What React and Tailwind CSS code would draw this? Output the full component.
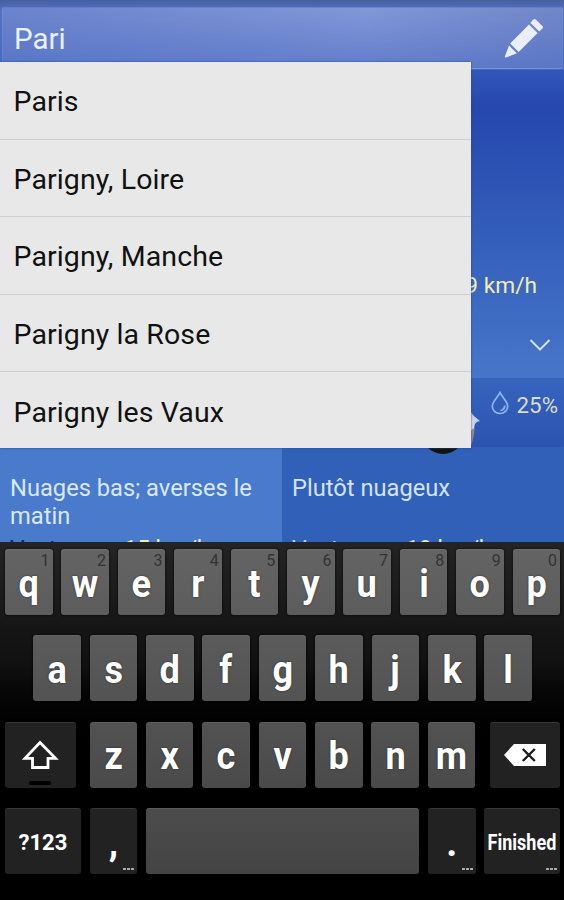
import React from "react";

const cities = ["Paris", "Parigny, Loire", "Parigny, Manche", "Parigny la Rose", "Parigny les Vaux"];

const letterKey =
  "relative flex h-[66px] w-[47.6px] shrink-0 items-center justify-center rounded-[3px] border-t border-white/10 text-[38px] font-bold leading-none text-white shadow-[0_0_2px_1px_#0006]";
const darkKey =
  "relative flex h-[66px] shrink-0 items-center justify-center rounded-[3px] border-t border-white/10 bg-[#222222] font-bold leading-none text-white shadow-[0_0_2px_1px_#0006]";

function LetterKey({ label, hint, tone }) {
  return (
    <div className={`${letterKey} ${tone}`}>
      {hint && <span className="absolute right-[3px] top-[2px] text-[16px] font-normal leading-[17px] text-[#333]">{hint}</span>}
      <span className="mt-[2px] scale-x-[0.95] [text-shadow:0_0_2px_#222]">{label}</span>
    </div>
  );
}

function Dots() {
  return (
    <span className="absolute bottom-[4px] right-[3px] flex gap-[1px]">
      <i className="h-[2px] w-[3px] bg-[#aaa]" />
      <i className="h-[2px] w-[3px] bg-[#aaa]" />
      <i className="h-[2px] w-[3px] bg-[#aaa]" />
    </span>
  );
}

function SearchBar() {
  return (
    <header className="h-[70px] bg-linear-to-b from-[#465f9f] via-[#5273c4] via-15% to-[#4169c5] pl-[2px] pr-[1px] pt-[7px]">
      <div className="h-[62px] rounded-[2px] bg-linear-to-r from-[#6c84cd] via-[#8398d8] via-65% to-[#7287c8]">
        <div className="flex h-[62px] items-center justify-between rounded-[2px] border border-white/5 bg-linear-to-b from-transparent to-[#4a6cc3]/60 pl-[11px] pr-[17px]">
          <span className="pt-[3px] text-[29.5px] leading-none text-[#e8f1ff]">Pari</span>
          <svg className="h-[42px] w-[42px]" viewBox="0 0 42 42" fill="#e9eefa">
            <path d="M30.2 2.6Q31.4 1.4 32.8 2.6L39.6 9.2Q40.4 10.2 39.4 11.4L36.2 14.6L27.4 6Z" />
            <path d="M26 7.4L34.6 15.9L15.6 35L7.2 26.6Z" />
            <path d="M6 28.4L13.8 36.2L3 40.6Q1.4 40.6 2 39Z" />
          </svg>
        </div>
      </div>
    </header>
  );
}

function Suggestions() {
  return (
    <ul className="absolute left-0 top-[62px] z-10 h-[386px] w-[471px] bg-[#e8e8e8] text-[28.5px] tracking-[0.1px] text-[#111] shadow-[0_0_2px_#2848a0]">
      {cities.map((c) => (
        <li key={c} className="flex h-[77.6px] items-center border-b border-[#cfcfcf] pl-[13.5px] pt-[4px] last:h-[75px] last:border-0 last:pt-[6px]">
          {c}
        </li>
      ))}
    </ul>
  );
}

function Wind({ speed, label }) {
  return (
    <div className="flex pt-[1px] text-[23px] leading-[27px]">
      <span className={`w-[114px] ${label}`}>Vent :</span>
      <span className="text-[#f2efb0]">{speed}</span>
    </div>
  );
}

function Weather() {
  return (
    <section className="relative h-[542px] overflow-hidden">
      <SearchBar />
      <div className="flex h-[308px] flex-col items-end bg-linear-to-b from-[#3157ba] via-[#2547ae] via-12% to-[#4776c9]">
        <span className="mr-[27px] mt-[202px] text-[22.7px] leading-[28px] text-[#efedb4]">9 km/h</span>
        <svg className="mr-[12px] mt-[37px] h-[16px] w-[24px]" viewBox="0 0 24 16" fill="none" stroke="#d5e2fa" strokeWidth="2">
          <path d="M2.5 3L12 12.5L21.5 3" />
        </svg>
      </div>
      <div className="grid h-[164px] grid-cols-2">
        <div className="bg-[#497acb] pl-[10px]">
          <p className="mt-[97px] h-[60px] whitespace-nowrap text-[23.7px] leading-[27.5px] text-[#d9e8ff]">Nuages bas; averses le<br />matin</p>
          <Wind speed="15 km/h" label="text-[#15254b]" />
        </div>
        <div className="bg-[#3060b7]">
          <div className="relative flex h-[69px] items-start justify-end bg-linear-to-b from-[#3763bd] to-[#2b54b1] pr-[6px] pt-[13px]">
            <svg className="absolute left-[130px] top-[28px] h-[50px] w-[72px]" viewBox="0 0 72 50">
              <circle cx="31" cy="26" r="22" fill="#101410" />
              <circle cx="49" cy="20" r="12" fill="#d5d8d1" />
              <path d="M59 14Q63 21 57 40" stroke="#8b8f88" strokeWidth="4" fill="none" />
              <path d="M57 4Q61 10 68 15Q62 16 62 22L57 26Z" fill="#e8eefa" fillOpacity=".8" />
            </svg>
            <svg className="mr-[8px] mt-0 h-[24px] w-[18px]" viewBox="0 0 18 24" fill="none" stroke="#91b8f2" strokeWidth="1.7">
              <path d="M9 1.5C7 6 1.3 10.4 1.3 15.2A7.7 7.3 0 0 0 16.7 15.2C16.7 10.4 11 6 9 1.5Z" />
              <path d="M13.7 14.5Q13.7 18.7 9.5 19.5" />
            </svg>
            <span className="text-[22.3px] leading-[28px] text-[#d8deca]">25%</span>
          </div>
          <p className="mt-[28px] h-[60px] pl-[10px] text-[23.7px] leading-[27.5px] text-[#d5e3ff]">Plutôt nuageux</p>
          <div className="pl-[10px]"><Wind speed="19 km/h" label="text-[#bdd3fa]" /></div>
        </div>
      </div>
      <Suggestions />
    </section>
  );
}

function Keyboard() {
  return (
    <section className="flex h-[358px] flex-col gap-[20.3px] bg-linear-to-b from-[#242424] via-[#101010] via-35% to-black to-60% pl-[5px] pt-[7px]">
      <div className="flex gap-[8.8px]">
        {[..."qwertyuiop"].map((c, i) => (
          <LetterKey key={c} label={c} hint={String((i + 1) % 10)} tone="bg-linear-to-b from-[#646464] to-[#5c5c5c]" />
        ))}
      </div>
      <div className="flex gap-[8.8px] pl-[28.2px]">
        {[..."asdfghjkl"].map((c) => (
          <LetterKey key={c} label={c} tone="bg-linear-to-b from-[#5b5b5b] to-[#535353]" />
        ))}
      </div>
      <div className="flex">
        <div className={`${darkKey} w-[70.5px]`}>
          <svg className="h-[30px] w-[38px]" viewBox="0 0 38 30" fill="none" stroke="white" strokeWidth="2.8">
            <path d="M19 2.5L34.5 18.3H27V27.5H11.5V18.3H4Z" />
          </svg>
          <span className="absolute bottom-[3px] left-[24px] h-[4px] w-[22px] rounded-full bg-black" />
        </div>
        <div className="ml-[14px] flex gap-[8.8px]">
          {[..."zxcvbnm"].map((c) => (
            <LetterKey key={c} label={c} tone="bg-linear-to-b from-[#525252] to-[#4a4a4a]" />
          ))}
        </div>
        <div className={`${darkKey} ml-[14.5px] w-[70px]`}>
          <svg className="h-[24px] w-[42px]" viewBox="0 0 42 24">
            <path d="M0 12L10 1H42V23H10Z" fill="white" />
            <path d="M18.8 6L30.8 18M30.8 6L18.8 18" stroke="#1b1b1b" strokeWidth="2.4" />
          </svg>
        </div>
      </div>
      <div className="flex gap-[8.8px]">
        <div className={`${darkKey} w-[75.8px] text-[22.5px]`}><span className="mt-[2px] scale-x-[0.98]">?123</span></div>
        <div className={`${darkKey} w-[47.6px] text-[38px]`}><span className="mt-[3px]">,</span><Dots /></div>
        <div className="h-[66px] w-[273.2px] rounded-[3px] border-t border-[#5b5b5b] bg-linear-to-b from-[#4c4c4c] to-[#444]" />
        <div className={`${darkKey} w-[47.6px] text-[38px]`}><span className="mt-[3px]">.</span><Dots /></div>
        <div className={`${darkKey} w-[75.6px] text-[22.5px]`}>
          <span className="mt-[2px] scale-x-[0.8]">Finished</span><Dots />
        </div>
      </div>
    </section>
  );
}

export default function App() {
  return (
    <main className="h-[900px] w-[564px] overflow-hidden bg-black font-[Roboto,sans-serif]">
      <Weather />
      <Keyboard />
    </main>
  );
}
